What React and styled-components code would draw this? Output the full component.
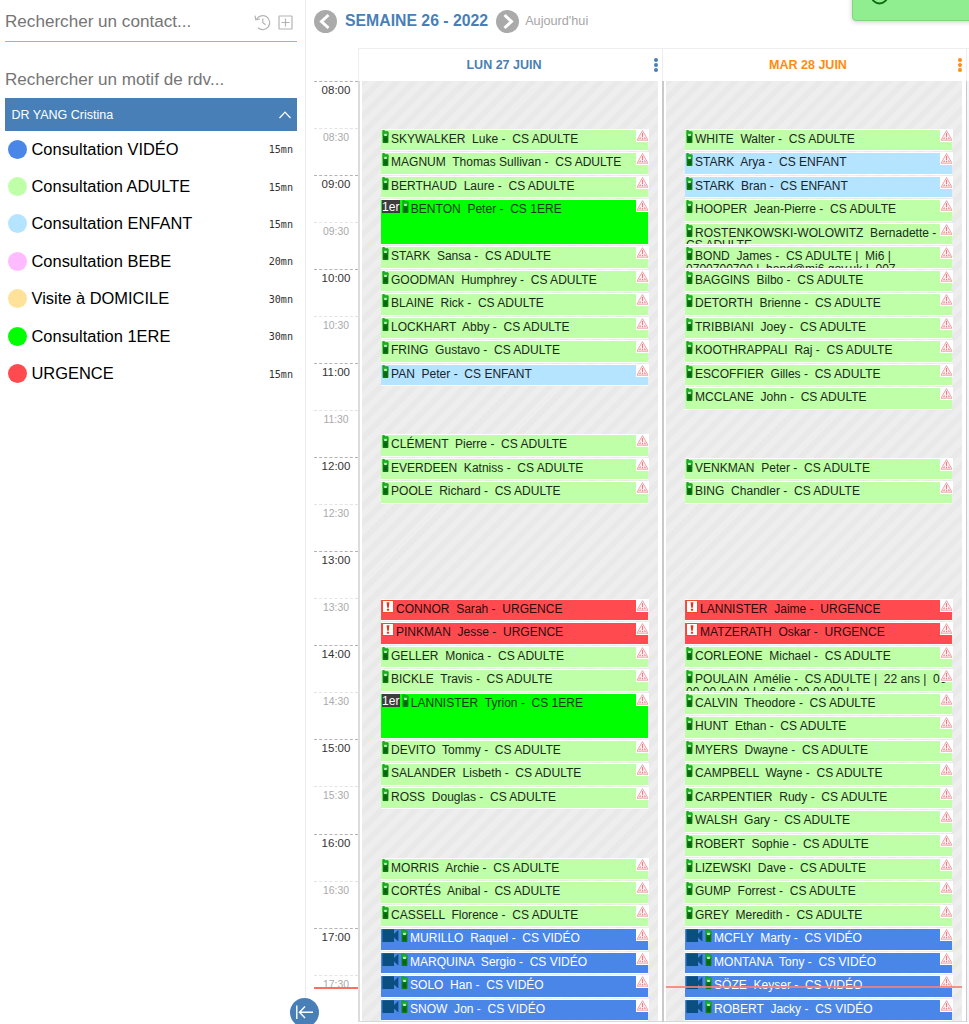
import React from 'react'
import styled, { createGlobalStyle, css } from 'styled-components'

const GlobalStyle = createGlobalStyle`
* {
  box-sizing: border-box;
}
body {
  margin: 0;
  background: #fff;
  color: #111;
  font-family: "Liberation Sans", Arial, sans-serif;
  overflow: hidden;
}
`;

const Page = styled.div`
display: flex;
position: relative;
width: 969px;
height: 1024px;
overflow: hidden;
`;

const Sidebar = styled.aside`
width: 306px;
flex: none;
border-right: 1px solid #ececec;
padding: 0 8px 0 5px;
`;

const SearchBox = styled.div`
display: flex;
align-items: center;
justify-content: space-between;
height: 42px;
padding: 3px 4px 0 0;
border-bottom: 1px solid #8fb3da;
font-size: 17.1px;
color: #757575;
`;

const SearchIcons = styled.div`
display: flex;
align-items: center;
gap: 7px;
`;

const MotifSearch = styled.div`
height: 56px;
padding-top: 28px;
font-size: 17.1px;
line-height: 20px;
color: #757575;
`;

const DoctorBar = styled.div`
display: flex;
align-items: center;
justify-content: space-between;
height: 33px;
padding: 0 6px 0 6.5px;
background: #487fb7;
color: #fff;
font-size: 12.5px;
`;

const MotifRow = styled.div`
display: flex;
align-items: center;
height: 37.4px;
padding: 0 4px 1px 3px;
font-size: 16.45px;
color: #000;
`;

const Dot = styled.span`
width: 19px;
height: 19px;
margin-right: 4.5px;
border-radius: 50%;
background: ${p => p.$color};
`;

const Duration = styled.span`
margin-left: auto;
padding-top: 1px;
font-family: "DejaVu Sans Mono", monospace;
font-size: 10.1px;
color: #333;
`;

const Agenda = styled.main`
flex: 1;
padding-left: 8px;
`;

const WeekNav = styled.div`
display: flex;
align-items: center;
height: 48px;
padding-bottom: 6px;
`;

const NavButton = styled.button`
display: flex;
width: 23px;
height: 23px;
padding: 0;
border: 0;
background: none;
`;

const WeekTitle = styled.h1`
margin: 0 8px;
font-size: 15.8px;
color: #487fb7;
white-space: nowrap;
`;

const Today = styled.span`
margin-left: 6px;
font-size: 12.7px;
color: #a5a5a5;
`;

const Calendar = styled.div`
display: grid;
grid-template-columns: 44px 304px 304px 4px;
grid-template-rows: 33px 940.8px;
`;

const DayHeader = styled.div`
display: flex;
align-items: center;
border: solid #eee;
border-width: 1px 0 0 1px;
color: ${p => p.$color};
font-size: 12.5px;
font-weight: bold;
`;

const DayName = styled.span`
flex: 1;
padding-right: 5px;
text-align: center;
`;

const MenuDots = styled.span`
display: flex;
flex-direction: column;
gap: 0.6px;
margin-right: 4px;
i {
  width: 4px;
  height: 4px;
  border-radius: 50%;
  background: currentColor;
}
`;

const Corner = styled.div`
border-top: ${p => (p.$line ? '1px solid #eee' : '0')};
border-left: ${p => (p.$line ? '1px solid #eee' : '0')};
`;

const TimeColumn = styled.div`
position: relative;
`;

const TimeSlot = styled.div`
height: 47.04px;
padding-top: 2px;
border-top: 1px dashed ${p => (p.$half ? '#e4e4e4' : '#b4b4b4')};
text-align: center;
font-size: ${p => (p.$half ? '10.4px' : '11.5px')};
line-height: 13px;
color: ${p => (p.$half ? '#aaa' : '#333')};
`;

const DayBody = styled.div`
position: relative;
border-left: 2px solid ${p => (p.$first ? '#dcdcdc' : '#c9c9cb')};
border-bottom: 1px solid #d8d8d8;
padding: 0 4px 0 2px;
`;

const Slots = styled.div`
display: grid;
grid-template-rows: repeat(40, 23.52px);
height: 940px;
padding: 0 10px 0 19px;
background: repeating-linear-gradient(-45deg, #eeeeee 0, #eeeeee 5.5px, #e9e9e9 6.5px, #e9e9e9 11.5px, #eeeeee 12px);
`;

const RightEdge = styled.div`
border-left: 1px solid #c9c9cb;
background: #f4f6fa;
`;

const Event = styled.div`
grid-row: ${p => p.$row} / span ${p => p.$span};
position: relative;
margin: 0.5px 0 0.5px;
padding: 0 0 0 1px;
border: 1px solid rgba(255, 255, 255, 0.85);
border-width: 1px 0;
background: ${p => p.$bg};
background-clip: padding-box;
color: ${p => p.$fg};
font-size: 12.04px;
line-height: 12.5px;
white-space: pre;
`;

const EventText = styled.div`
height: 100%;
overflow: hidden;
`;

const inlineIcon = css`
display: inline-block;
vertical-align: baseline;
`;

const PhoneSvg = styled.svg`
${inlineIcon}
margin-right: 2px;
`;

const CamSvg = styled.svg`
${inlineIcon}
margin: 0 2px 0 0;
`;

const UrgentSvg = styled.svg`
${inlineIcon}
margin-right: 2px;
`;

const FirstBadge = styled.span`
display: inline-block;
height: 13px;
margin: 0 1.4px 0 -1px;
padding: 0 1px;
background: #3d3d3d;
color: #fff;
line-height: 14px;
vertical-align: top;
`;

const Warning = styled.span`
position: absolute;
top: -1px;
right: -1px;
display: flex;
width: 13px;
height: 13px;
background: #fff;
`;

const NowLine = styled.div`
position: absolute;
top: ${p => p.$top};
left: ${p => p.$left};
right: ${p => p.$right};
height: 2px;
background: ${p => p.$color};
`;

const Toast = styled.div`
position: absolute;
top: -20px;
right: -6px;
width: 123px;
height: 41px;
padding: 1px 0 0 18px;
border: 1px solid #7fd67f;
border-radius: 4px;
background: #90ee90;
box-shadow: 0 1px 5px rgba(0, 0, 0, 0.2);
`;

const Collapse = styled.button`
position: absolute;
left: 290px;
top: 998px;
width: 29px;
height: 29px;
padding: 0;
border: 0;
border-radius: 50%;
background: #487fb7;
`;

const motifs = [
  ['Consultation VIDÉO', '15mn', '#4a86e8'],
  ['Consultation ADULTE', '15mn', '#beffa8'],
  ['Consultation ENFANT', '15mn', '#b4e4ff'],
  ['Consultation BEBE', '20mn', '#ffbbff'],
  ['Visite à DOMICILE', '30mn', '#ffe299'],
  ['Consultation 1ERE', '30mn', '#00ff00'],
  ['URGENCE', '15mn', '#ff4a4f'],
]

const types = {
  A: { label: 'CS ADULTE', bg: '#beffa8', fg: '#1c2a18' },
  E: { label: 'CS ENFANT', bg: '#b4e4ff', fg: '#18242c' },
  P: { label: 'CS 1ERE', bg: '#00ff00', fg: '#0c3a0c', span: 2 },
  U: { label: 'URGENCE', bg: '#ff4a4f', fg: '#2c0c0e' },
  V: { label: 'CS VIDÉO', bg: '#4a86e8', fg: '#fff' },
}

// [quarter-hour slot counted from 08:00, name, type, extra text]
const monday = [
  [2, 'SKYWALKER  Luke', 'A'],
  [3, 'MAGNUM  Thomas Sullivan', 'A'],
  [4, 'BERTHAUD  Laure', 'A'],
  [5, 'BENTON  Peter', 'P'],
  [7, 'STARK  Sansa', 'A'],
  [8, 'GOODMAN  Humphrey', 'A'],
  [9, 'BLAINE  Rick', 'A'],
  [10, 'LOCKHART  Abby', 'A'],
  [11, 'FRING  Gustavo', 'A'],
  [12, 'PAN  Peter', 'E'],
  [15, 'CLÉMENT  Pierre', 'A'],
  [16, 'EVERDEEN  Katniss', 'A'],
  [17, 'POOLE  Richard', 'A'],
  [22, 'CONNOR  Sarah', 'U'],
  [23, 'PINKMAN  Jesse', 'U'],
  [24, 'GELLER  Monica', 'A'],
  [25, 'BICKLE  Travis', 'A'],
  [26, 'LANNISTER  Tyrion', 'P'],
  [28, 'DEVITO  Tommy', 'A'],
  [29, 'SALANDER  Lisbeth', 'A'],
  [30, 'ROSS  Douglas', 'A'],
  [33, 'MORRIS  Archie', 'A'],
  [34, 'CORTÉS  Anibal', 'A'],
  [35, 'CASSELL  Florence', 'A'],
  [36, 'MURILLO  Raquel', 'V'],
  [37, 'MARQUINA  Sergio', 'V'],
  [38, 'SOLO  Han', 'V'],
  [39, 'SNOW  Jon', 'V'],
]

const tuesday = [
  [2, 'WHITE  Walter', 'A'],
  [3, 'STARK  Arya', 'E'],
  [4, 'STARK  Bran', 'E'],
  [5, 'HOOPER  Jean-Pierre', 'A'],
  [6, 'ROSTENKOWSKI-WOLOWITZ  Bernadette', 'A', '', '\n'],
  [7, 'BOND  James', 'A', ' |  Mi6 |\n0700700700 |  bond@mi6.gov.uk |  007'],
  [8, 'BAGGINS  Bilbo', 'A'],
  [9, 'DETORTH  Brienne', 'A'],
  [10, 'TRIBBIANI  Joey', 'A'],
  [11, 'KOOTHRAPPALI  Raj', 'A'],
  [12, 'ESCOFFIER  Gilles', 'A'],
  [13, 'MCCLANE  John', 'A'],
  [16, 'VENKMAN  Peter', 'A'],
  [17, 'BING  Chandler', 'A'],
  [22, 'LANNISTER  Jaime', 'U'],
  [23, 'MATZERATH  Oskar', 'U'],
  [24, 'CORLEONE  Michael', 'A'],
  [25, 'POULAIN  Amélie', 'A', ' |  22 ans |  06\n00 00 00 00 |  06 00 00 00 00 |'],
  [26, 'CALVIN  Theodore', 'A'],
  [27, 'HUNT  Ethan', 'A'],
  [28, 'MYERS  Dwayne', 'A'],
  [29, 'CAMPBELL  Wayne', 'A'],
  [30, 'CARPENTIER  Rudy', 'A'],
  [31, 'WALSH  Gary', 'A'],
  [32, 'ROBERT  Sophie', 'A'],
  [33, 'LIZEWSKI  Dave', 'A'],
  [34, 'GUMP  Forrest', 'A'],
  [35, 'GREY  Meredith', 'A'],
  [36, 'MCFLY  Marty', 'V'],
  [37, 'MONTANA  Tony', 'V'],
  [38, 'SÖZE  Keyser', 'V'],
  [39, 'ROBERT  Jacky', 'V'],
]

const days = [
  { name: 'LUN 27 JUIN', color: '#487fb7', events: monday },
  { name: 'MAR 28 JUIN', color: '#ff8c10', events: tuesday, today: true },
]

const times = Array.from({ length: 20 }, (_, i) => {
  const hour = String(8 + Math.floor(i / 2)).padStart(2, '0')
  return `${hour}:${i % 2 ? '30' : '00'}`
})

const Phone = () => (
  <PhoneSvg width="7" height="13" viewBox="0 0 7 13">
    <path d="M0.6 1Q0.6 0 1.6 0H2.4V1.6H5.8Q6.4 1.6 6.4 2.2V12.2Q6.4 13 5.6 13H1.4Q0.6 13 0.6 12.2Z" fill="#0a7a10" />
    <path d="M0.6 1Q0.6 0 1.6 0H2.4V1.6H5.8Q6.4 1.6 6.4 2.2V5.5H0.6Z" fill="#17ad1e" />
    <rect x="2.2" y="3.8" width="2.6" height="2.2" fill="#c2f0bd" />
    <rect x="2.2" y="7.5" width="2.8" height="4" fill="#0a640f" />
  </PhoneSvg>
)

const Camera = () => (
  <CamSvg width="17" height="13" viewBox="0 0 17 13">
    <path d="M0.4 0.2H12V5L16.4 0.8V12.6L12 8.6V12.9H0.4Z" fill="#0a4f80" />
  </CamSvg>
)

const Urgent = () => (
  <UrgentSvg width="12" height="13" viewBox="0 0 12 13">
    <rect x="0.5" y="0.5" width="11" height="12" fill="#fff" stroke="#f04a28" />
    <path d="M4.6 2.2H7.4L6.8 7.8H5.2Z" fill="#e8361c" />
    <rect x="4.9" y="8.7" width="2.2" height="2" fill="#e8361c" />
  </UrgentSvg>
)

const WarningIcon = () => (
  <svg width="13" height="13" viewBox="0 0 13 13">
    <path d="M6.5 1.6L12 11.2H1Z" fill="#fff4f4" stroke="#f2a0a6" strokeWidth="1" strokeLinejoin="round" />
    <path d="M6.5 4V8M6.5 8.8V10.2M4.6 8.6L3.6 10M8.4 8.6L9.4 10" stroke="#ee7883" strokeWidth="1.1" />
  </svg>
)

const Appointment = ({ data }) => {
  const [slot, name, type, extra = '', sep = '  '] = data
  const t = types[type]
  return (
    <Event $row={slot + 1} $span={t.span || 1} $bg={t.bg} $fg={t.fg}>
      <EventText>
        {type === 'P' && <FirstBadge>1er</FirstBadge>}
        {type === 'V' && <Camera />}
        {type === 'U' ? <Urgent /> : <Phone />}
        {`${name} -${sep}${t.label}${extra}`}
      </EventText>
      <Warning><WarningIcon /></Warning>
    </Event>
  )
}

const Arrow = ({ d }) => (
  <svg width="23" height="23" viewBox="0 0 23 23">
    <circle cx="11.5" cy="11.5" r="11.5" fill="#aaa" />
    <path d={d} fill="none" stroke="#fff" strokeWidth="3" />
  </svg>
)

const App = () => {
  return (
    <Page>
      <GlobalStyle />
      <Sidebar>
        <SearchBox>
          Rechercher un contact...
          <SearchIcons>
            <svg width="17" height="17" viewBox="0 0 17 17" fill="none" stroke="#b4b4b4" strokeWidth="1.2">
              <path d="M2.6 5.2A7 7 0 1 1 4 13.8M1 1.6L1.8 5.8L6 5M8.8 4.4V8.8L11.6 10.8" />
            </svg>
            <svg width="15" height="15" viewBox="0 0 15 15" fill="none" stroke="#b4b4b4" strokeWidth="1.2">
              <rect x="1" y="1" width="13" height="13" rx="0.5" />
              <path d="M7.5 3.5V11.5M3.5 7.5H11.5" />
            </svg>
          </SearchIcons>
        </SearchBox>
        <MotifSearch>Rechercher un motif de rdv...</MotifSearch>
        <DoctorBar>
          DR YANG Cristina
          <svg width="12" height="8" viewBox="0 0 12 8" fill="none" stroke="#fff" strokeWidth="1.2">
            <path d="M0.5 7L6 1.2L11.5 7" />
          </svg>
        </DoctorBar>
        {motifs.map(([label, duration, color]) => (
          <MotifRow key={label}>
            <Dot $color={color} />
            {label}
            <Duration>{duration}</Duration>
          </MotifRow>
        ))}
      </Sidebar>

      <Agenda>
        <WeekNav>
          <NavButton><Arrow d="M14.5 5L7.5 11.5L14.5 18" /></NavButton>
          <WeekTitle>SEMAINE 26 - 2022</WeekTitle>
          <NavButton><Arrow d="M8.5 5L15.5 11.5L8.5 18" /></NavButton>
          <Today>Aujourd'hui</Today>
        </WeekNav>
        <Calendar>
          <Corner />
          {days.map(day => (
            <DayHeader key={day.name} $color={day.color}>
              <DayName>{day.name}</DayName>
              <MenuDots><i /><i /><i /></MenuDots>
            </DayHeader>
          ))}
          <Corner $line />
          <TimeColumn>
            {times.map((time, i) => (
              <TimeSlot key={time} $half={i % 2 === 1}>{time}</TimeSlot>
            ))}
            <NowLine $top="906px" $left="0" $right="0" $color="#f8705f" />
          </TimeColumn>
          {days.map((day, i) => (
            <DayBody key={day.name} $first={i === 0}>
              <Slots>
                {day.events.map(e => <Appointment key={e[0]} data={e} />)}
              </Slots>
              {day.today && <NowLine $top="905px" $left="2px" $right="4px" $color="rgba(248, 128, 118, 0.85)" />}
            </DayBody>
          ))}
          <RightEdge />
        </Calendar>
      </Agenda>

      <Toast>
        <svg width="18" height="23" viewBox="0 0 18 23">
          <circle cx="8.5" cy="13.5" r="8" fill="none" stroke="#0b6b12" strokeWidth="1.8" />
        </svg>
      </Toast>
      <Collapse>
        <svg width="29" height="29" viewBox="0 0 29 29" fill="none" stroke="#fff" strokeWidth="1.4">
          <path d="M6.8 7.5V21M23 14.2H9.5M15 8.5L9.5 14.2L15 20" />
        </svg>
      </Collapse>
    </Page>
  )
}

export default App
